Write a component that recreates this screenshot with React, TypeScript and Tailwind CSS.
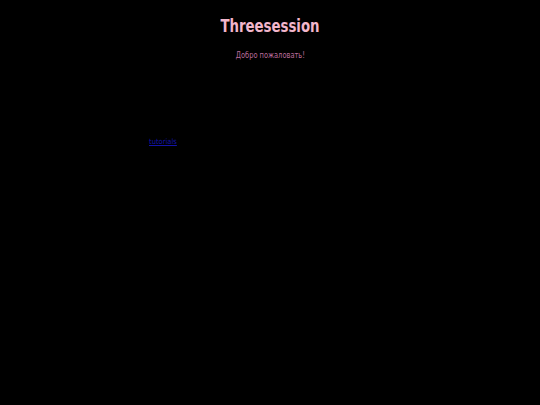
export default function App() {
  return (
    <div className="min-h-[405px] w-full bg-black font-['DejaVu_Sans_Condensed','DejaVu_Sans',sans-serif]">
      <div className="flex flex-col items-center pt-[14px]">
        <h1 className="scale-x-[0.87] text-[17px] font-bold leading-[24px] text-[#f2b6cb]">Threesession</h1>
        <p className="mt-[10px] scale-x-[0.78] text-[9.5px] leading-[14px] text-[#bc6c9c]">Добро пожаловать!</p>
      </div>
      <div className="pl-[149px] pt-[65px]">
        <a href="#" className="text-[7.5px] leading-[10px] text-[#1414a8] underline">tutorials</a>
      </div>
    </div>
  )
}
